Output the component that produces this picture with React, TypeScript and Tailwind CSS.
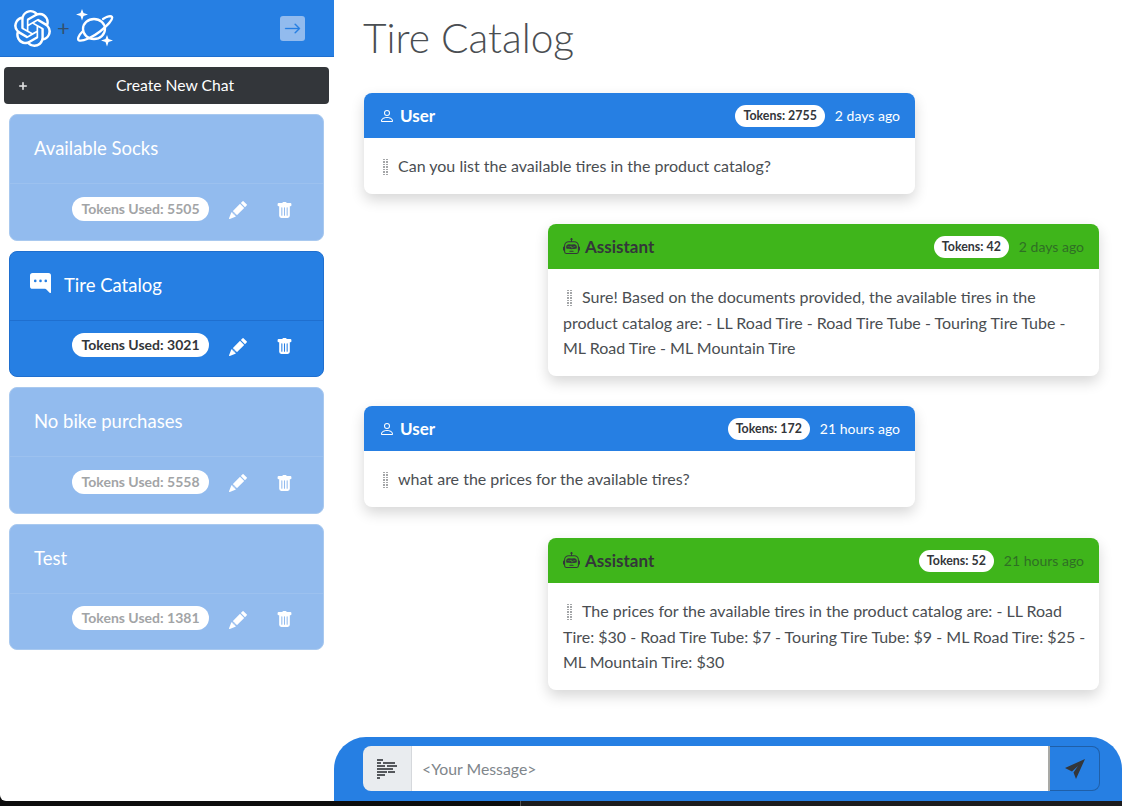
import React from "react";
import { SiOpenai } from "react-icons/si";
import {
  BsTrashFill,
  BsPencilFill,
  BsChatRightDotsFill,
  BsPerson,
  BsRobot,
  BsArrowRight,
  BsPlusLg,
} from "react-icons/bs";

const chats = [
  { title: "Available Socks", tokens: 5505, active: false },
  { title: "Tire Catalog", tokens: 3021, active: true },
  { title: "No bike purchases", tokens: 5558, active: false },
  { title: "Test", tokens: 1381, active: false },
];

const messages = [
  {
    role: "User",
    tokens: 2755,
    time: "2 days ago",
    text: "Can you list the available tires in the product catalog?",
  },
  {
    role: "Assistant",
    tokens: 42,
    time: "2 days ago",
    text: "Sure! Based on the documents provided, the available tires in the product catalog are: - LL Road Tire - Road Tire Tube - Touring Tire Tube - ML Road Tire - ML Mountain Tire",
  },
  {
    role: "User",
    tokens: 172,
    time: "21 hours ago",
    text: "what are the prices for the available tires?",
  },
  {
    role: "Assistant",
    tokens: 52,
    time: "21 hours ago",
    text: "The prices for the available tires in the product catalog are: - LL Road Tire: $30 - Road Tire Tube: $7 - Touring Tire Tube: $9 - ML Road Tire: $25 - ML Mountain Tire: $30",
  },
];

function PlanetLogo() {
  return (
    <svg width={38} height={38} viewBox="0 0 38 38" fill="none" stroke="white" strokeWidth={2.3} aria-hidden="true">
      <ellipse cx={18} cy={20} rx={11} ry={10} />
      <path d="M27 10c4-2.500 8-3.500 9-2 1.200 2.200-5 9-12 14.500S7 32.500 3 31.500c-2-1-.5-5 3.500-9" strokeLinecap="round" />
      <path d="M6 0l1.500 4L12 5.500 7.500 7 6 11.500 4.500 7 0 5.500 4.500 4z" fill="white" stroke="none" />
      <path d="M31 26l1.500 4 4.500 1.500-4.500 1.500-1.500 4.500-1.500-4.500-4.500-1.500 4.500-1.500z" fill="white" stroke="none" />
    </svg>
  );
}

function Grip() {
  return (
    <span className="ml-[4px] inline-grid w-[6px] -translate-y-[1px] grid-cols-2 justify-between gap-y-px align-middle">
      {Array.from({ length: 14 }).map((_, i) => (
        <span key={i} className="h-[1.5px] w-[2px] bg-[#a4a6a8]" />
      ))}
    </span>
  );
}

function InputIcon() {
  const rows = [
    [0, 0, 6],
    [0, 3, 4],
    [6, 3, 12],
    [0, 6, 8],
    [10, 6, 10],
    [0, 9, 16],
    [0, 12, 10],
    [11, 12, 7],
    [0, 15, 8],
    [0, 18, 3],
  ];
  return (
    <svg width={20} height={20} viewBox="0 0 20 20" fill="#55585c" aria-hidden="true">
      {rows.map(([x, y, w], i) => (
        <rect key={i} x={x} y={y} width={w} height={2} />
      ))}
    </svg>
  );
}

function ChatCard({ title, tokens, active }: { title: string; tokens: number; active: boolean }) {
  return (
    <div
      className={`flex h-[126.5px] flex-col rounded-lg border ${
        active ? "border-[#1f6fcf] bg-[#267fe3]" : "border-[#a9c9ef] bg-[#92bbee]"
      }`}
    >
      <div className={`flex h-[69px] items-center border-b ${active ? "border-[#1f6fcf] pl-5" : "border-[#9cc1ef] pl-6"}`}>
        {active && <BsChatRightDotsFill className="mr-[13px] mt-[-4px] text-white" size={21} />}
        <span className="text-[18.500px] text-white">{title}</span>
      </div>
      <div className="flex flex-1 items-center justify-end pb-[6px] pr-[30px]">
        <span
          className={`rounded-full bg-white px-[9.500px] py-[3px] text-[14px] leading-[18px] font-bold ${
            active ? "text-[#33363a]" : "text-[#a2a4a6]"
          }`}
        >
          Tokens Used: {tokens}
        </span>
        <BsPencilFill className="ml-[20px] mt-[3px] text-white" size={18} />
        <BsTrashFill className="ml-[29px] mt-[3px] text-white" size={17} />
      </div>
    </div>
  );
}

function Message({ role, tokens, time, text }: { role: string; tokens: number; time: string; text: string }) {
  const isUser = role === "User";
  return (
    <div
      className={`w-[551px] overflow-hidden rounded-lg bg-white shadow-[0_6px_14px_rgba(0,0,0,0.16)] last:mt-px ${
        isUser ? "self-start" : "self-end"
      }`}
    >
      <div
        className={`flex h-[45px] items-center px-[15px] ${
          isUser ? "bg-[#267fe3] text-white" : "bg-[#3fb51b] text-[#33363a]"
        }`}
      >
        {isUser ? <BsPerson size={16} /> : <BsRobot size={17} />}
        <span className="ml-[5px] text-[17px] font-bold">{role}</span>
        <span className="ml-auto rounded-full bg-white px-[8px] py-[2px] text-[12.400px] leading-[18px] font-bold text-[#33363a]">
          Tokens: {tokens}
        </span>
        <span className={`ml-[10px] text-[14px] ${isUser ? "" : "text-[#2f6f25]"}`}>{time}</span>
      </div>
      <p className="py-[15px] pl-[15px] pr-[13px] text-[16px] leading-[25.500px] text-[#4a4e52]">
        <Grip />
        <span className="ml-[9px]">{text}</span>
      </p>
    </div>
  );
}

export default function App() {
  return (
    <div className="flex h-[806px] w-[1122px] flex-col overflow-hidden bg-[#0d0d0d] font-['Lato',sans-serif]">
      <div className="flex min-h-0 flex-1 overflow-hidden rounded-bl-[6px] bg-white">
        {/* Sidebar */}
        <aside className="w-[334px] shrink-0">
          <div className="flex h-[57px] items-center border-b border-[#1f6fcf] bg-[#267fe3] pl-[14px] pr-[29px]">
            <SiOpenai className="text-white" size={37} />
            <span className="ml-[6px] mr-[6px] text-[22px] leading-none text-[#33506f]">+</span>
            <PlanetLogo />
            <button className="ml-auto flex h-[25px] w-[25px] items-center justify-center rounded-[3px] bg-[#92bbee] text-[#267fe3]">
              <BsArrowRight size={17} strokeWidth={0.3} />
            </button>
          </div>
          <button className="relative mx-[4px] mt-[10px] flex h-[37px] w-[325px] items-center justify-center rounded bg-[#33363a] pl-[17px] text-[15.700px] text-white">
            <BsPlusLg className="absolute left-[14px] text-white" size={10} strokeWidth={1} />
            Create New Chat
          </button>
          <div className="mx-[9px] mt-[10px] flex w-[315px] flex-col gap-[10px]">
            {chats.map((c) => (
              <ChatCard key={c.title} {...c} />
            ))}
          </div>
        </aside>

        {/* Conversation */}
        <main className="flex min-w-0 flex-1 flex-col">
          <h1 className="ml-[29px] mt-[11px] text-[40.700px] leading-[53px] font-light text-[#4a4e52]">Tire Catalog</h1>
          <div className="ml-[30px] mr-[23px] mt-[29px] flex flex-col gap-[30.500px]">
            {messages.map((m, i) => (
              <Message key={i} {...m} />
            ))}
          </div>
          <div className="mt-auto flex h-[64px] items-start rounded-t-[32px] bg-[#267fe3] pl-[29px] pr-[22px] pt-[9px]">
            <div className="flex h-[45px] flex-1 overflow-hidden rounded-l-lg">
              <div className="flex w-[49px] items-center justify-center border-r border-[#d5d8dc] bg-[#e9ecef]">
                <InputIcon />
              </div>
              <div className="flex flex-1 items-center border-r-2 border-[#a9a9a5] bg-white pl-[10px] text-[15.800px] text-[#80868b]">
                &lt;Your Message&gt;
              </div>
            </div>
            <button className="flex h-[45px] w-[50px] items-center justify-center rounded-r-lg border border-l-0 border-[#1f5fa8] text-[#33363a]">
              <svg width={22} height={22} viewBox="0 0 22 22" fill="currentColor" aria-hidden="true">
                <path d="M21 1 1 10l7 3.500L14 8l-4.500 6.500L12 21z" />
              </svg>
            </button>
          </div>
        </main>
      </div>
      <div className="ml-[520px] h-[5px] shrink-0 border-l border-[#555] bg-[#1c1c1e]" />
    </div>
  );
}
